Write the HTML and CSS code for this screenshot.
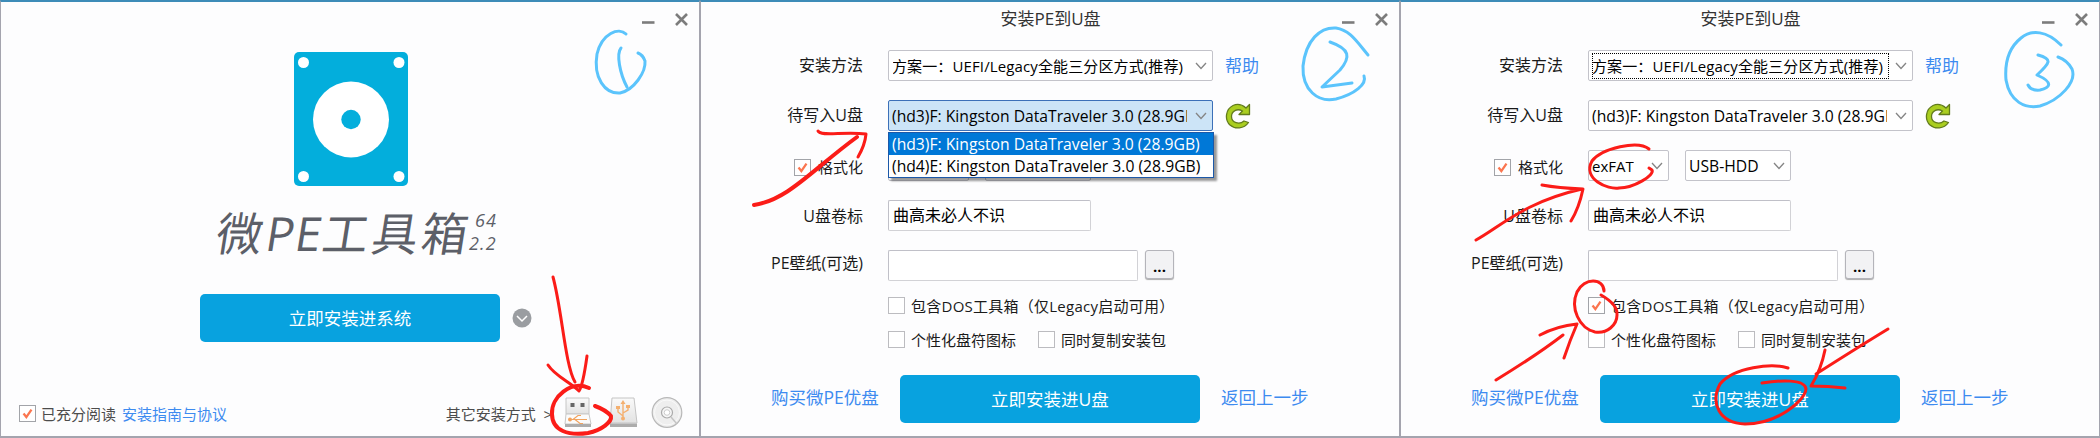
FILE: index.html
```html
<!DOCTYPE html>
<html lang="zh-CN">
<head>
<meta charset="utf-8">
<title>微PE工具箱</title>
<link rel="stylesheet" href="styles.css">
</head>
<body>
<svg class="defs" width="0" height="0" aria-hidden="true">
  <symbol id="controls" viewBox="0 0 60 24"><path d="M3 15.5h12.500" stroke="#7c7c7c" stroke-width="2.6"/><path d="M37 7l11 11M48 7l-11 11" stroke="#7c7c7c" stroke-width="2.6"/></symbol>
  <symbol id="chev" viewBox="0 0 12 8"><path d="M1 1l5 5.5L11 1" fill="none" stroke="#858585" stroke-width="1.3"/></symbol>
  <symbol id="tick" viewBox="0 0 17 17"><path d="M4 8.5l3.2 4L13 4" fill="none" stroke="#fb7650" stroke-width="2.6"/></symbol>
  <symbol id="refresh" viewBox="0 0 26 26"><path d="M24.500 1.500V11.500H14l3.500-3.500C12 5 6.500 8 6.500 13.500c0 6.500 8 8.500 12.500 4.500l4.500 1.500C19 26 10 26.500 5 22-1 16 1 6 8 2.500c4.500-2 9-1 13 2.500z" fill="#aace20" stroke="#627c1c" stroke-width="1.3" stroke-linejoin="round"/></symbol>
</svg>
<main class="board">
  <section class="panel">
    <header class="titlebar"><svg class="controls"><use href="#controls"/></svg></header>
    <div class="home">
      <svg class="disk" viewBox="0 0 114 134"><rect width="114" height="134" rx="5" fill="#03aedc"/><circle cx="57" cy="67.500" r="38" fill="#fff"/><circle cx="57" cy="67.500" r="9.700" fill="#03aedc"/><g fill="#fff"><circle cx="9.500" cy="10.500" r="5.500"/><circle cx="105" cy="10.500" r="5.500"/><circle cx="9.500" cy="124.500" r="5.500"/><circle cx="105" cy="124.500" r="5.500"/></g></svg>
      <div class="brand"><h1><span>微</span><span class="lat">PE</span><span>工具箱</span></h1><div class="version"><span>64</span><span>2.2</span></div></div>
      <div class="start"><button class="primary">立即安装进系统</button><svg class="more" viewBox="0 0 20 20"><circle cx="10" cy="10" r="9.500" fill="#9a9da1"/><path d="M5 8l5 5 5-5" fill="none" stroke="#fff" stroke-width="1.500"/></svg></div>
    </div>
    <footer class="foot">
      <span class="check"><svg><use href="#tick"/></svg></span>
      <span class="agree">已充分阅读</span><a class="guide">安装指南与协议</a>
      <span class="others">其它安装方式&nbsp; &gt;</span>
      <svg class="icons" viewBox="0 0 124 34">
        <defs><linearGradient id="g" x1="0" y1="0" x2="0" y2="1"><stop offset="0" stop-color="#fafafa"/><stop offset="1" stop-color="#e2e2e2"/></linearGradient></defs>
        <path d="M6 2h23v16H6z" fill="url(#g)" stroke="#c6c6c6"/><path d="M10.500 7h4v4h-4zM20.500 7h4v4h-4z" fill="#666"/>
        <path d="M6 18h23l2 10H5z" fill="#fbfbfb" stroke="#c8c8c8"/><path d="M5 28h26v3H5z" fill="#adadad"/>
        <g fill="none" stroke="#f2a35e" stroke-width="1.200"><path d="M9 23.500h18M13 23.500l5-4h3M15 23.500l5 4h3"/></g><circle cx="10" cy="23.500" r="2" fill="#f2a35e"/>
        <path d="M52 2h22l3 25H50z" fill="url(#g)" stroke="#c4c4c4"/><path d="M50 27.500h27V31H50z" fill="#acacac"/>
        <g fill="none" stroke="#f4b070" stroke-width="1.400"><path d="M63 6v17M63 20l-5-4v-4M63 17l5-3v-3"/></g><circle cx="63" cy="22.500" r="2" fill="#f4b070"/><path d="M63 4l2.500 4h-5zM56 10h4v3h-4zM66 9h4v3h-4z" fill="#f4b070"/>
        <circle cx="107" cy="16.500" r="14.800" fill="#eee" stroke="#b8b8b8" stroke-width="1.200"/><circle cx="107" cy="16.500" r="12.500" fill="none" stroke="#fafafa"/><circle cx="107" cy="16.500" r="5.500" fill="#f6f6f6" stroke="#aaa" stroke-width="1.200"/><circle cx="107" cy="16.500" r="2.800" fill="#fff" stroke="#ccc"/><path d="M111 21l5.500 6.500" stroke="#c4c4c4" stroke-width="1.500"/>
      </svg>
    </footer>
    <svg class="ink" viewBox="0 0 700 438">
      <g class="blue"><path d="M626 34C619 27 602 33 597 54C593 78 605 94 620 93C634 90 646 72 645 61Q643 55 638 53"/><path d="M621 48C616 54 620 74 627 87"/></g>
      <g class="red"><path d="M553 277C562 310 565 365 575 382M548 365C555 376 570 382 579 391Q583 385 587 356"/><path class="bold" d="M589 388C571 380 551 397 552 414C552 431 569 436 588 433C602 430 612 422 611 416Q606 410 595 406"/></g>
    </svg>
  </section>

  <section class="panel">
    <header class="titlebar"><h2>安装PE到U盘</h2><svg class="controls"><use href="#controls"/></svg></header>
    <div class="form">
      <label>安装方法</label><div class="row"><div class="select wide"><span class="value method">方案一：UEFI/Legacy全能三分区方式(推荐)</span><svg><use href="#chev"/></svg></div><a class="help">帮助</a></div>
      <label>待写入U盘</label><div class="row"><div class="select wide open"><span class="value drive">(hd3)F: Kingston DataTraveler 3.0 (28.9GB)</span><svg><use href="#chev"/></svg>
        <ul class="menu"><li class="on">(hd3)F: Kingston DataTraveler 3.0 (28.9GB)</li><li>(hd4)E: Kingston DataTraveler 3.0 (28.9GB)</li></ul></div><svg class="refresh"><use href="#refresh"/></svg></div>
      <label class="format"><span class="check"><svg><use href="#tick"/></svg></span>格式化</label><div class="row"><div class="select fs"></div><div class="select mode"></div></div>
      <label class="volume">U盘卷标</label><div class="row"><div class="input vol">曲高未必人不识</div></div>
      <label class="wallpaper">PE壁纸(可选)</label><div class="row"><div class="input path"></div><button class="browse">...</button></div>
    </div>
    <div class="options">
      <div class="opt"><span class="check off"></span><span class="dos">包含DOS工具箱（仅Legacy启动可用）</span></div>
      <div class="opt"><span class="check off"></span><span>个性化盘符图标</span><span class="check off second"></span><span>同时复制安装包</span></div>
    </div>
    <div class="actions"><a class="buy">购买微PE优盘</a><button class="primary">立即安装进U盘</button><a class="back">返回上一步</a></div>
    <svg class="ink" viewBox="0 0 700 438">
      <g class="blue"><path d="M668 55C657 42 650 30 636 28C620 27 606 40 603 66C602 90 618 103 636 99C655 94 667 84 664 76"/><path d="M630 42C650 49 651 57 640 70L622 87L652 83"/></g>
      <g class="red"><path class="bold" d="M54 205C88 200 113 169 157 137"/><path d="M118 131C121 137 144 131 166 134Q165 145 158 157"/></g>
    </svg>
  </section>

  <section class="panel">
    <header class="titlebar"><h2>安装PE到U盘</h2><svg class="controls"><use href="#controls"/></svg></header>
    <div class="form">
      <label>安装方法</label><div class="row"><div class="select wide"><span class="value method focus">方案一：UEFI/Legacy全能三分区方式(推荐)</span><svg><use href="#chev"/></svg></div><a class="help">帮助</a></div>
      <label>待写入U盘</label><div class="row"><div class="select wide"><span class="value drive">(hd3)F: Kingston DataTraveler 3.0 (28.9GB)</span><svg><use href="#chev"/></svg></div><svg class="refresh"><use href="#refresh"/></svg></div>
      <label class="format"><span class="check"><svg><use href="#tick"/></svg></span>格式化</label><div class="row"><div class="select fs"><span class="value">exFAT</span><svg><use href="#chev"/></svg></div><div class="select mode"><span class="value">USB-HDD</span><svg><use href="#chev"/></svg></div></div>
      <label class="volume">U盘卷标</label><div class="row"><div class="input vol">曲高未必人不识</div></div>
      <label class="wallpaper">PE壁纸(可选)</label><div class="row"><div class="input path"></div><button class="browse">...</button></div>
    </div>
    <div class="options">
      <div class="opt"><span class="check"><svg><use href="#tick"/></svg></span><span class="dos">包含DOS工具箱（仅Legacy启动可用）</span></div>
      <div class="opt"><span class="check off"></span><span>个性化盘符图标</span><span class="check off second"></span><span>同时复制安装包</span></div>
    </div>
    <div class="actions"><a class="buy">购买微PE优盘</a><button class="primary">立即安装进U盘</button><a class="back">返回上一步</a></div>
    <svg class="ink" viewBox="0 0 700 438">
      <g class="blue"><path d="M661 45C647 31 632 29 621 38C606 50 605 68 606 80C610 102 625 109 640 106C660 100 677 82 672 69Q667 60 658 57"/><path d="M638 55C653 59 650 63 637 75C655 83 649 88 640 90Q631 91 628 85"/></g>
      <g class="red"><path d="M249 149C238 140 202 148 192 161C182 179 208 190 219 188C234 188 255 175 252 170L249 168"/><path d="M76 240C100 227 124 202 182 189M142 185Q158 188 183 189Q179 208 171 221"/><path d="M204 291C204 278 184 277 177 292C170 308 179 328 195 332C207 334 217 325 217 315C218 306 208 299 201 295"/><path d="M96 380Q137 355 163 335M140 335Q157 326 177 324Q170 340 164 358"/><path d="M488 329Q460 346 416 374M425 350Q421 370 411 386Q428 386 445 388"/><path d="M388 368C372 363 334 367 320 384C310 403 319 423 345 424C377 424 405 401 406 389C405 379 381 380 362 383"/></g>
    </svg>
  </section>
</main>
</body>
</html>
```

FILE: styles.css
```css
* { box-sizing: border-box; }
body { margin: 0; font-family: "Open Sans", "Noto Sans CJK SC", sans-serif; font-size: 15px; color: #1a1a1a; }
h1, h2, ul { margin: 0; padding: 0; font-weight: 400; list-style: none; }
button { font: inherit; padding: 0; border: 0; }
.defs { position: absolute; }
.board { display: flex; width: 2100px; height: 438px; overflow: hidden; }
.panel { position: relative; width: 700px; height: 438px; flex: none; background: #fdfdfe; border: 1px solid #a4a4ae; border-top: 2px solid #3d8cb8; border-bottom: 2px solid #a4a4ae; white-space: nowrap; }
.ink { position: absolute; left: -1px; top: -2px; width: 700px; height: 438px; pointer-events: none; z-index: 5; fill: none; stroke-linecap: round; stroke-linejoin: round; }
.blue { stroke: #5bc4fc; stroke-width: 3; }
.red { stroke: #fb1c18; stroke-width: 3; }
.red .bold { stroke-width: 4; }
a { color: #3d8bf0; }

.titlebar { height: 48px; display: flex; justify-content: center; }
.titlebar h2 { flex: 1; padding-left: 61px; font-size: 17px; line-height: 34px; text-align: center; color: #333; }
.controls { width: 60px; height: 24px; margin: 5px 0 0 auto; }
.titlebar h2 + .controls { margin-left: 0; }

.home { display: flex; flex-direction: column; height: 324px; }
.disk { width: 114px; height: 134px; margin: 2px 0 0 293px; }
.brand { display: flex; height: 62px; margin: 17px 0 0 216px; color: #5c5f68; }
.brand h1 { display: flex; width: 252px; font-size: 46px; line-height: 60px; letter-spacing: 3.500px; transform: skewX(-9deg); }
.brand .lat { font-size: 47px; letter-spacing: 1px; }
.version { display: flex; flex-direction: column; font-size: 18px; line-height: 23px; font-style: italic; letter-spacing: 1.200px; padding-top: 6px; }
.version span:first-child { padding-left: 6px; }
.start { display: flex; align-items: center; gap: 12px; margin: 29px 0 0 199px; }
.primary { width: 300px; height: 48px; border-radius: 5px; background: #08a2df; color: #fff; font-size: 17.500px; line-height: 48px; }
.more { width: 20px; height: 20px; }
.foot { display: flex; align-items: center; height: 62px; padding: 16px 15px 0 18px; color: #4c4c4c; }
.agree { margin: 0 6px 0 5px; }
.others { margin-left: auto; margin-right: 8px; }
.icons { width: 124px; height: 34px; flex: none; }

.check { display: inline-block; flex: none; width: 17px; height: 17px; border: 1px solid #a2a4a9; background: #fff; }
.check svg { display: block; width: 15px; height: 15px; }
.check.off { border-color: #bcbcc0; }

.form { display: grid; grid-template-columns: 162px 512px; column-gap: 25px; grid-auto-rows: 31px; row-gap: 19px; }
.form label { text-align: right; font-size: 16px; line-height: 30px; }
.form .format { display: flex; justify-content: flex-end; align-items: center; gap: 7px; font-size: 15px; line-height: 31px; padding-top: 3px; }
.form .volume { line-height: 32px; }
.form .wallpaper { line-height: 26px; }
.row { display: flex; }
.select, .input { height: 31px; border: 1px solid #c3c3ca; border-radius: 2px; background: #fff; color: #000; }
.select { position: relative; display: flex; align-items: center; padding: 0 5px 0 3px; }
.select > svg { width: 12px; height: 8px; margin-left: auto; flex: none; }
.wide { width: 325px; }
.value { overflow: hidden; line-height: 24px; }
.wide .value { width: 297px; border: 1px solid transparent; }
.wide .focus { border: 1px dotted #000; }
.method { letter-spacing: .12px; text-indent: -1px; }
.drive, .menu { font-size: 15.700px; }
.wide .drive { width: 296px; border-left: 0; }
.open { background: #cce4f7; border-color: #3c70b8; }
.menu { position: absolute; z-index: 2; left: -1px; top: 31px; width: 326px; border: 1px solid #1c58a8; background: #fff; box-shadow: 3px 3px 2px rgba(0, 0, 0, .4); }
.menu li { height: 22px; line-height: 22px; padding-left: 3px; }
.menu .on { background: #0078d7; color: #fff; }
.help { margin-left: 12px; font-size: 17px; line-height: 32px; }
.refresh { width: 26px; height: 26px; margin: 3px 0 0 12px; }
.fs { width: 81px; margin-right: 16px; }
.mode { width: 106px; }
.mode .value { font-size: 15.700px; }
.input { padding-left: 4px; line-height: 29px; border-color: #c0c0c8 #d2d2d6 #d2d2d6 #c0c0c8; font-size: 16px; }
.vol { width: 203px; }
.path { width: 250px; }
.browse { width: 29px; height: 29px; margin-left: 7px; border: 1px solid #b4b4ba; border-radius: 3px; background: #f2f2f4; box-shadow: 0 1px 1px #aaa; font-weight: 700; line-height: 31px; }

.options { padding: 7px 0 0 187px; }
.opt { display: flex; align-items: center; height: 34px; gap: 6px; }
.dos { letter-spacing: .25px; }
.second { margin-left: 16px; }
.actions { display: flex; align-items: flex-start; height: 48px; margin-top: 19px; font-size: 17.500px; line-height: 45px; }
.buy { width: 129px; margin-left: 70px; }
.back { margin-left: 21px; }
```
